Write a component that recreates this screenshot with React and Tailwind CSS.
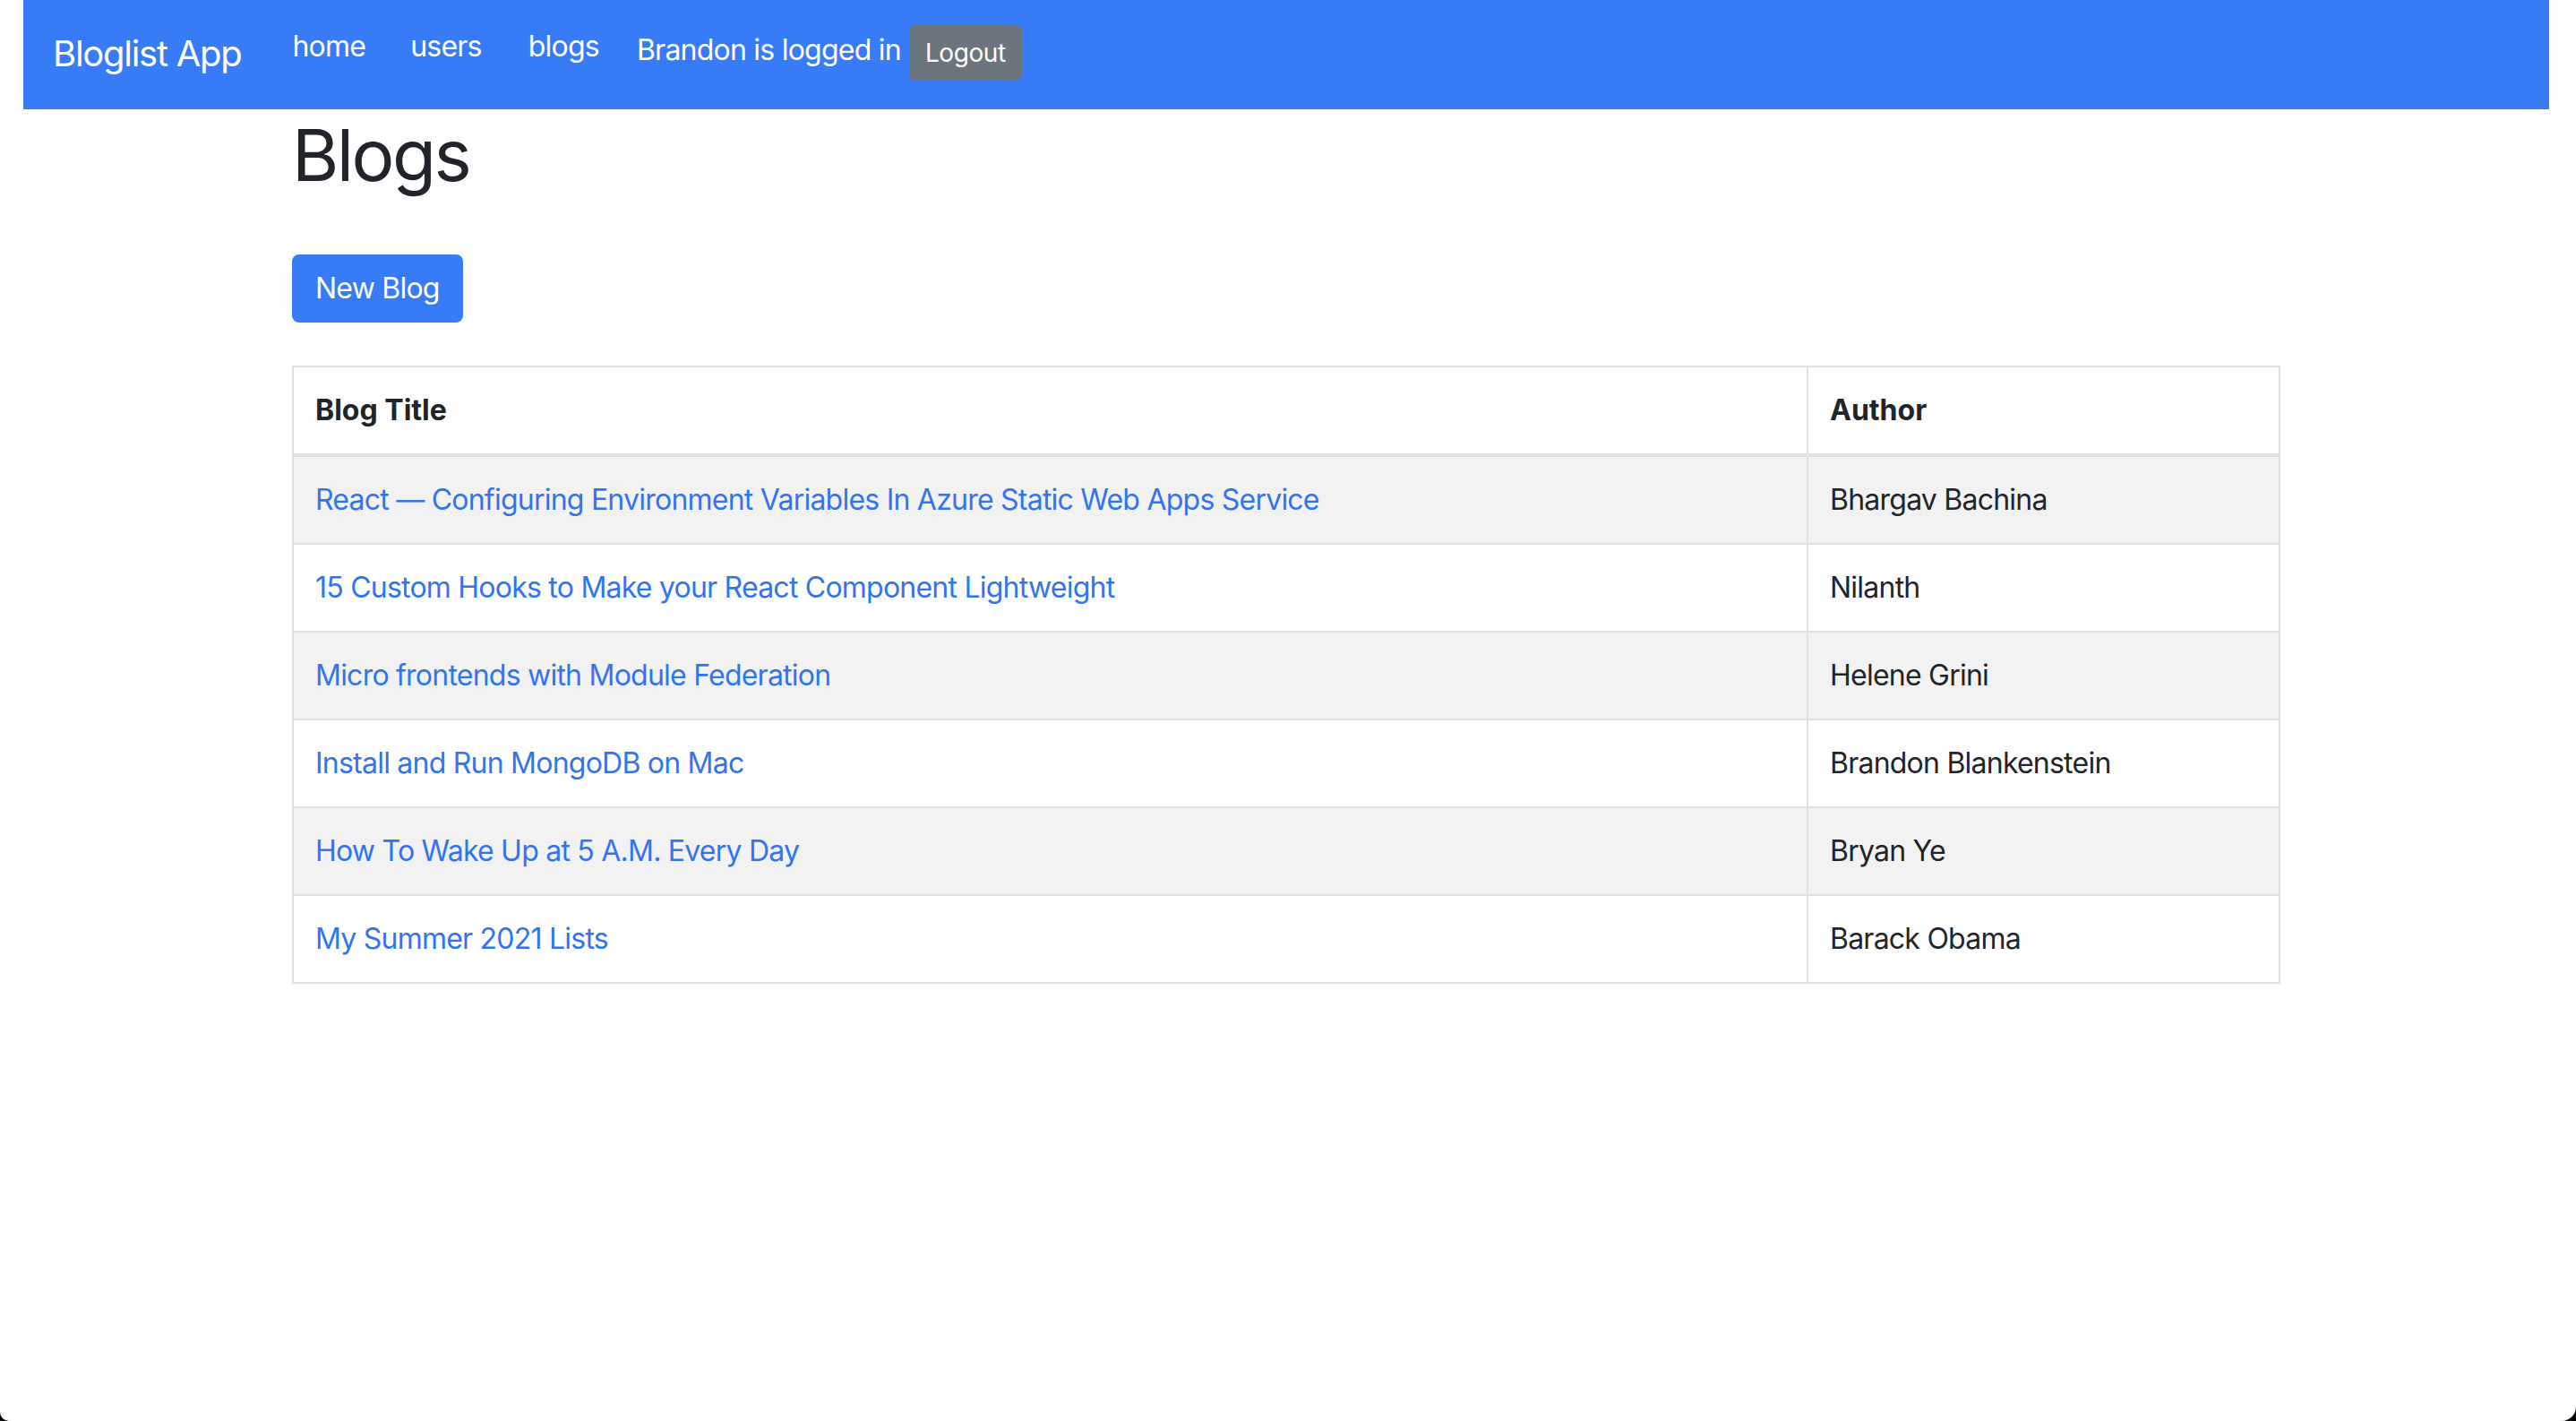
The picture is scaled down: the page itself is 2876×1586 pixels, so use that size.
import React from "react";

const blogs = [
  ["React — Configuring Environment Variables In Azure Static Web Apps Service", "Bhargav Bachina"],
  ["15 Custom Hooks to Make your React Component Lightweight", "Nilanth"],
  ["Micro frontends with Module Federation", "Helene Grini"],
  ["Install and Run MongoDB on Mac", "Brandon Blankenstein"],
  ["How To Wake Up at 5 A.M. Every Day", "Bryan Ye"],
  ["My Summer 2021 Lists", "Barack Obama"],
];

export default function App() {
  return (
    <div className="w-[2876px] h-[1586px] bg-black overflow-hidden">
      <div
        className="w-full h-full bg-white rounded-bl-[10px] rounded-br-[16px] pl-[26px] pr-[30px] text-[#212529]"
        style={{ fontFamily: '"Inter", "Liberation Sans", sans-serif' }}
      >
        <nav className="h-[122px] bg-[#377bf6] flex items-start pl-[33px] text-white">
          <span className="text-[40px] leading-[60px] mt-[30px] tracking-[-0.032em]">Bloglist App</span>
          <a className="text-[32px] leading-[48px] mt-[28px] ml-[57px] tracking-[-0.024em]">home</a>
          <a className="text-[32px] leading-[48px] mt-[28px] ml-[50px] tracking-[-0.024em]">users</a>
          <a className="text-[32px] leading-[48px] mt-[28px] ml-[52px] tracking-[-0.024em]">blogs</a>
          <span className="text-[32px] leading-[48px] mt-[32px] ml-[42px] tracking-[-0.024em]">Brandon is logged in</span>
          <button className="mt-[28px] ml-[9px] h-[62px] px-[18px] rounded-[7px] bg-[#6c757d] text-white text-[28px] leading-[42px] tracking-[-0.015em]">
            Logout
          </button>
        </nav>
        <main className="pl-[300px] pr-[300px]">
          <h1 className="text-[80px] leading-[96px] font-normal mt-[3px] tracking-[-0.032em]">Blogs</h1>
          <button className="mt-[63px] h-[76px] px-[26px] rounded-[8px] bg-[#377bf6] text-white text-[32px] leading-[48px] tracking-[-0.024em]">
            New Blog
          </button>
          <table className="mt-[48px] w-[2220px] table-fixed border-collapse border-2 border-[#dee2e6] text-[32px] leading-[48px] tracking-[-0.024em]">
            <colgroup>
              <col className="w-[1691px]" />
              <col />
            </colgroup>
            <thead>
              <tr className="border-b-4 border-[#dee2e6]">
                <th className="text-left font-bold tracking-normal p-[24px] border-2 border-b-4 border-[#dee2e6]">Blog Title</th>
                <th className="text-left font-bold tracking-normal p-[24px] border-2 border-b-4 border-[#dee2e6]">Author</th>
              </tr>
            </thead>
            <tbody>
              {blogs.map(([title, author], i) => (
                <tr key={title} className={i % 2 === 0 ? "bg-[#f2f2f2]" : "bg-white"}>
                  <td className="p-[24px] border-2 border-[#dee2e6]">
                    <a className="text-[#3274f0]">{title}</a>
                  </td>
                  <td className="p-[24px] border-2 border-[#dee2e6]">{author}</td>
                </tr>
              ))}
            </tbody>
          </table>
        </main>
      </div>
    </div>
  );
}
